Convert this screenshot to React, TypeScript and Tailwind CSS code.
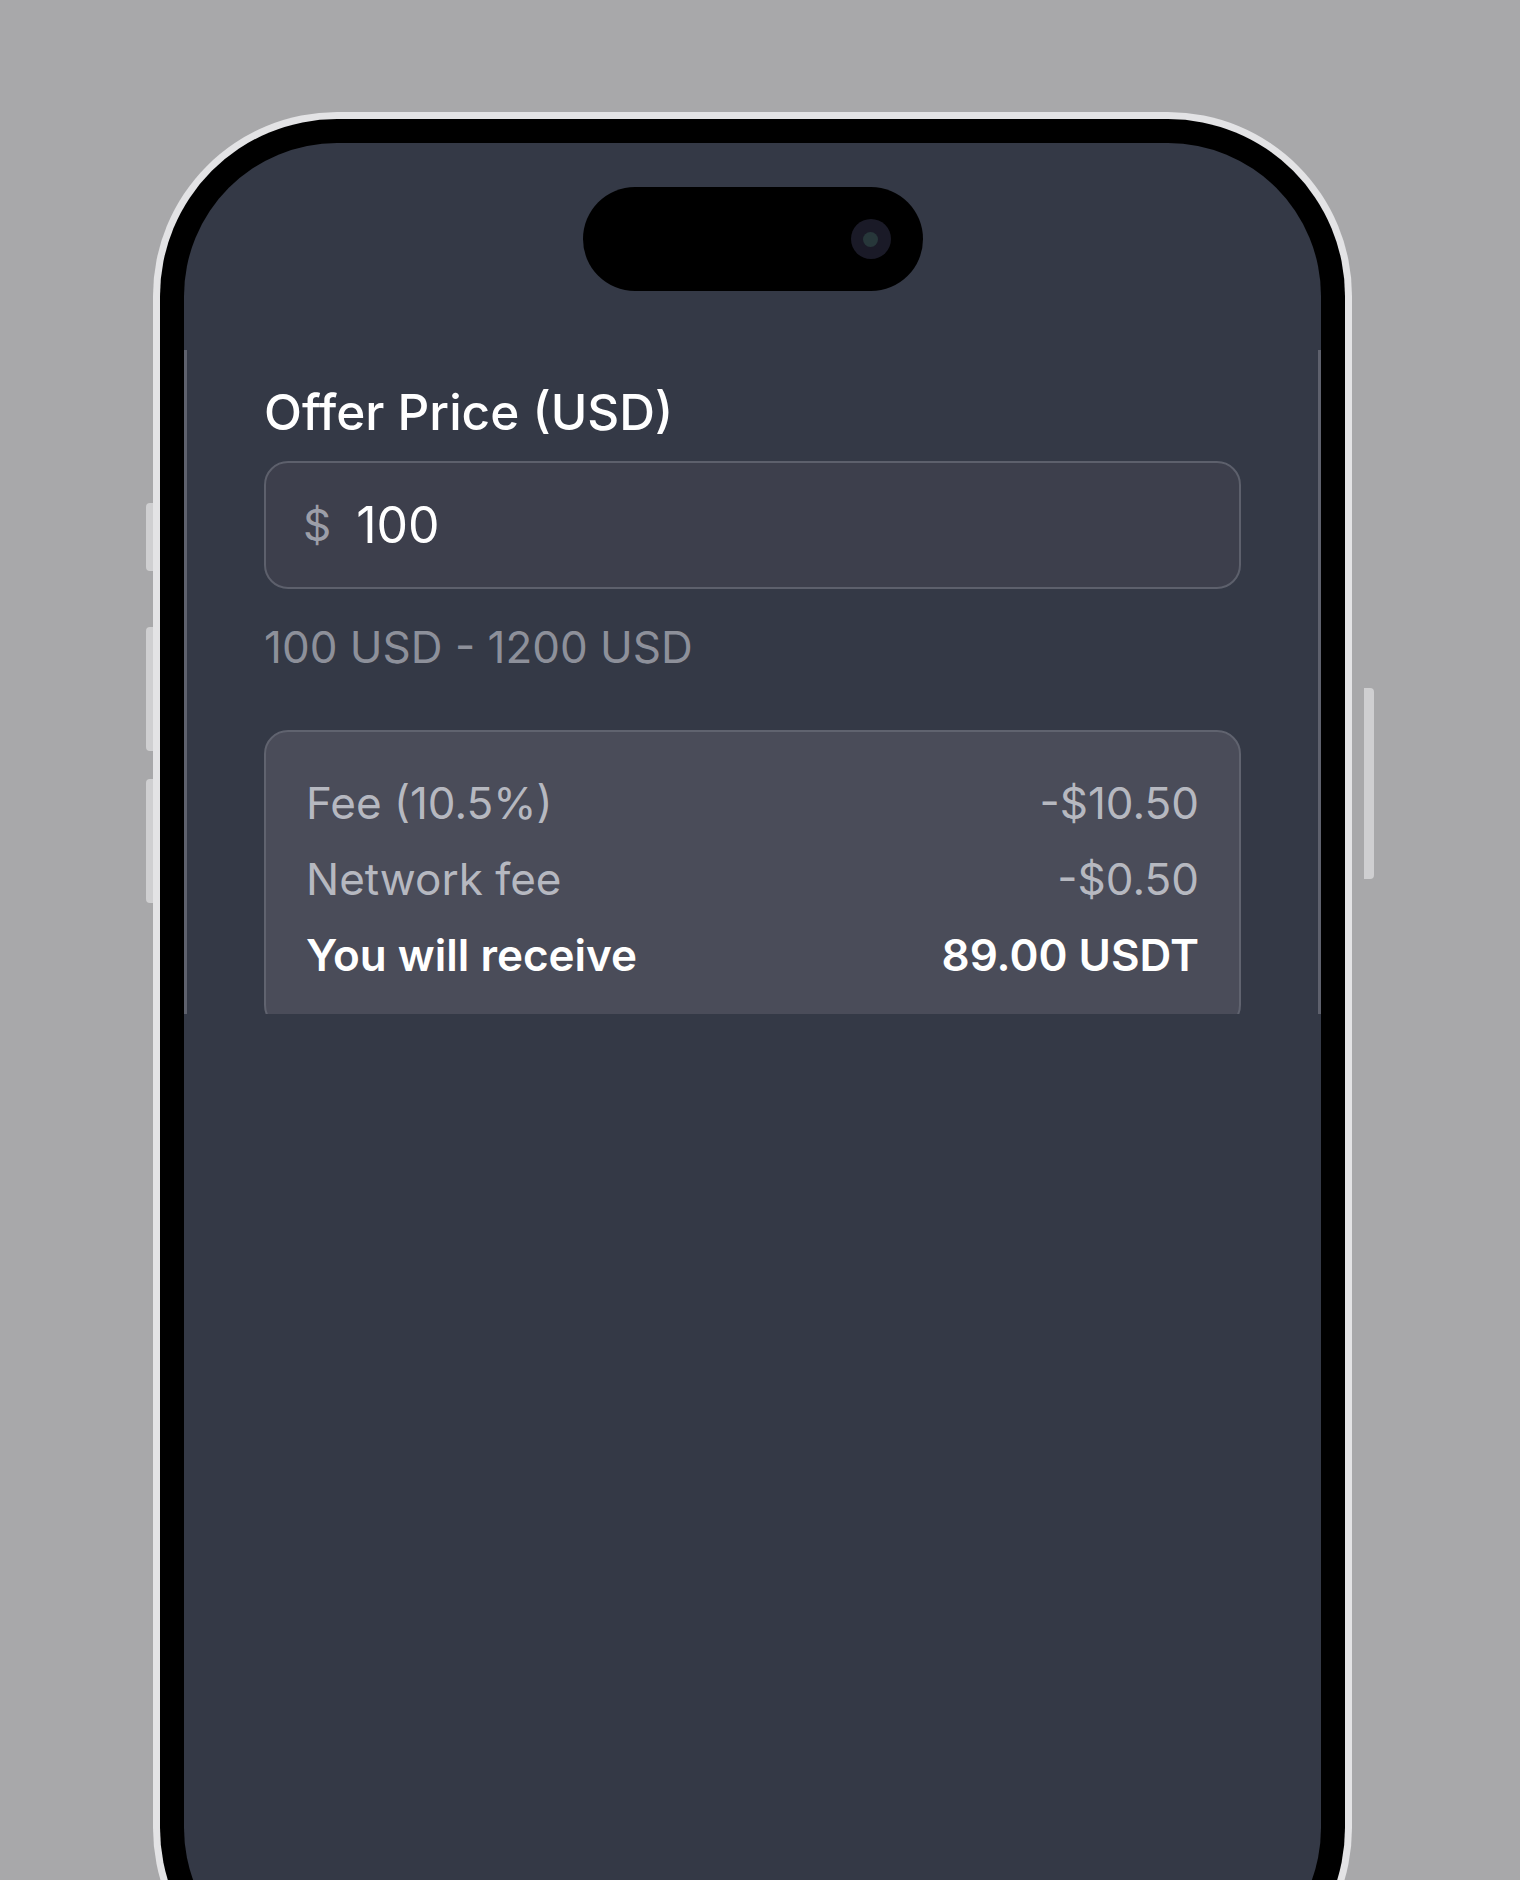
const rows = [
  { label: 'Fee (10.5%)', value: '-$10.50' },
  { label: 'Network fee', value: '-$0.50' },
]

function SideButtons() {
  return (
    <>
      <div className="absolute left-[-7px] top-[391px] h-[68px] w-[7px] rounded-l-[4px] bg-[#cfcfd1]" />
      <div className="absolute left-[-7px] top-[515px] h-[124px] w-[7px] rounded-l-[4px] bg-[#cfcfd1]" />
      <div className="absolute left-[-7px] top-[667px] h-[124px] w-[7px] rounded-l-[4px] bg-[#cfcfd1]" />
      <div className="absolute right-[-22px] top-[576px] h-[191px] w-[10px] rounded-r-[4px] bg-[#cfcfd1]" />
    </>
  )
}

function DynamicIsland() {
  return (
    <div className="mx-auto flex h-[104px] w-[340px] shrink-0 items-center justify-end rounded-full bg-black pr-[32px]">
      <div className="flex h-[40px] w-[40px] items-center justify-center rounded-full bg-[#1a1a27]">
        <div className="h-[15px] w-[15px] rounded-full bg-[#27373a]" />
      </div>
    </div>
  )
}

function OfferForm() {
  return (
    <div className="mt-[59px] h-[664px] shrink-0 overflow-hidden border-x-[3px] border-[#5e616d] px-[77px] pt-[32px]">
      <label className="block text-[49.5px] font-medium leading-[60px] text-white">
        Offer Price (USD)
      </label>

      <div className="mt-[19px] flex h-[128px] items-center rounded-[24px] border-2 border-[#5d606c] bg-[#3d3f4c] pl-[37px]">
        <span className="text-[44px] text-[#9c9ea8]">$</span>
        <span className="ml-[25px] text-[50px] text-white">100</span>
      </div>

      <p className="mt-[27px] text-[44px] leading-[63px] text-[#8d909a]">100 USD - 1200 USD</p>

      <div className="mt-[51px] flex flex-col gap-[13px] rounded-[24px] border-2 border-[#60636f] bg-[#4a4c59] p-[40px]">
        {rows.map((row) => (
          <div key={row.label} className="flex justify-between text-[44px] leading-[63px] text-[#b6b8c0]">
            <span>{row.label}</span>
            <span>{row.value}</span>
          </div>
        ))}
        <div className="flex justify-between text-[44px] font-semibold leading-[63px] text-white">
          <span>You will receive</span>
          <span>89.00 USDT</span>
        </div>
      </div>
    </div>
  )
}

export default function App() {
  return (
    <div
      className="h-[1880px] w-[1520px] overflow-hidden bg-[#a8a8aa] pl-[153px] pt-[112px]"
      style={{ fontFamily: 'Inter, "Noto Sans", sans-serif' }}
    >
      <div className="relative h-[1900px] w-[1199px] rounded-[184px] bg-[#e3e3e5] p-[7px]">
        <SideButtons />
        <div className="h-full rounded-[177px] bg-black p-[24px]">
          <div className="flex h-full flex-col rounded-[153px] bg-[#343946] pt-[44px]">
            <DynamicIsland />
            <OfferForm />
          </div>
        </div>
      </div>
    </div>
  )
}
